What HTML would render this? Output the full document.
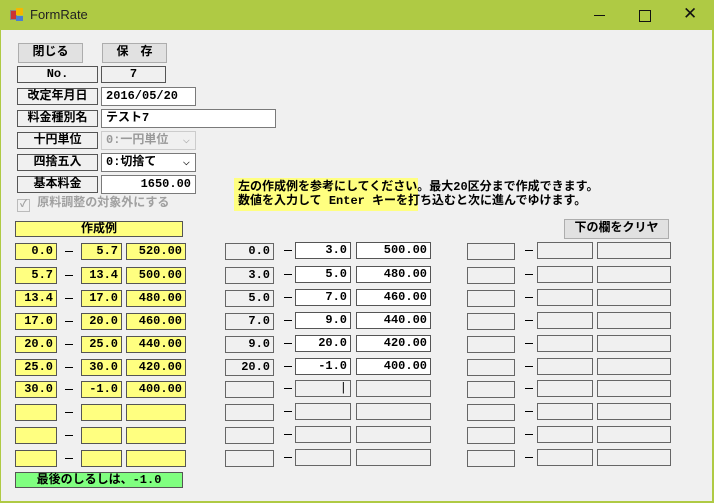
<!DOCTYPE html>
<html><head><meta charset="utf-8"><style>
body{margin:0;width:714px;height:503px;overflow:hidden;background:#afca44;font-family:"Liberation Mono","Noto Sans CJK JP",monospace;}
#win{position:absolute;left:1px;top:30px;width:711px;height:471px;background:#f0f0f0;}
.a{position:absolute;box-sizing:border-box;font-size:12px;font-weight:bold;line-height:14px;white-space:nowrap;color:#000;}
.lb{border:1px solid #555;background:#f0f0f0;text-align:center;}
.in{border:1px solid #7a7a7a;background:#fff;padding:0 4px;}
.r{text-align:right;padding-right:4px;}
.y{border:1px solid #555;background:#ffff80;text-align:right;padding-right:3px;}
.g{border:1px solid #666;background:#f0f0f0;text-align:right;padding-right:3px;}
.w{border:1px solid #555;background:#fff;text-align:right;padding-right:3px;}
.btn{border:1px solid #adadad;background:#e1e1e1;text-align:center;line-height:17px;}
.d{position:absolute;height:1px;width:8px;background:#000;}
</style></head><body>
<div style="position:absolute;left:10px;top:8px;width:14px;height:14px;">
<div style="position:absolute;left:0;top:2px;width:5px;height:8px;background:#c33;border:1px solid #888"></div>
<div style="position:absolute;left:6px;top:0;width:7px;height:7px;background:#f5b800"></div>
<div style="position:absolute;left:6px;top:8px;width:7px;height:5px;background:#4a7fd0"></div></div>
<div style="position:absolute;left:30px;top:7px;font-family:'Liberation Sans',sans-serif;font-size:13px;color:#222">FormRate</div>
<div style="position:absolute;left:594px;top:15px;width:11px;height:1px;background:#111"></div>
<div style="position:absolute;left:639px;top:10px;width:10px;height:10px;border:1px solid #111"></div>
<div style="position:absolute;left:683px;top:4px;font-family:'DejaVu Sans';font-size:17px;color:#111">✕</div>
<div id="win"></div>
<div class="a btn" style="left:18px;top:43px;width:65px;height:20px">閉じる</div>
<div class="a btn" style="left:102px;top:43px;width:65px;height:20px">保　存</div>
<div class="a lb" style="left:17px;top:66px;width:81px;height:17px">No.</div>
<div class="a lb" style="left:101px;top:66px;width:65px;height:17px">7</div>
<div class="a lb" style="left:17px;top:88px;width:81px;height:17px">改定年月日</div>
<div class="a in" style="left:101px;top:87px;width:95px;height:19px;line-height:17px">2016/05/20</div>
<div class="a lb" style="left:17px;top:110px;width:81px;height:17px">料金種別名</div>
<div class="a in" style="left:101px;top:109px;width:175px;height:19px;line-height:17px">テスト7</div>
<div class="a lb" style="left:17px;top:132px;width:81px;height:17px">十円単位</div>
<div class="a in" style="left:101px;top:131px;width:95px;height:19px;line-height:17px;color:#999;border-color:#ccc;background:#f0f0f0">0:一円単位<span style="position:absolute;right:5px;font-weight:normal;color:#aaa">⌵</span></div>
<div class="a lb" style="left:17px;top:154px;width:81px;height:17px">四捨五入</div>
<div class="a in" style="left:101px;top:153px;width:95px;height:19px;line-height:17px">0:切捨て<span style="position:absolute;right:5px;font-weight:normal">⌵</span></div>
<div class="a lb" style="left:17px;top:176px;width:81px;height:17px">基本料金</div>
<div class="a in r" style="left:101px;top:175px;width:95px;height:19px;line-height:17px">1650.00</div>
<div class="a" style="left:17px;top:196px;color:#a0a0a0"><span style="display:inline-block;width:11px;height:11px;border:1px solid #bbb;font-size:10px;line-height:11px;text-align:center;vertical-align:-1px">✓</span> 原料調整の対象外にする</div>
<div class="a" style="left:234px;top:178px;width:184px;height:33px;background:#ffff80;padding:2px 4px;line-height:14px">左の作成例を参考にしてください。最大20区分まで作成できます。<br>数値を入力して Enter キーを打ち込むと次に進んでゆけます。</div>
<div class="a y" style="left:15px;top:221px;width:168px;height:16px;text-align:center;padding:0">作成例</div>
<div class="a btn" style="left:564px;top:219px;width:105px;height:20px">下の欄をクリヤ</div>
<div class="a" style="left:15px;top:472px;width:168px;height:16px;background:#80ff80;border:1px solid #555;text-align:center">最後のしるしは、-1.0</div>
<div id="rows"></div>
<script>
var L=[["0.0","5.7","520.00"],["5.7","13.4","500.00"],["13.4","17.0","480.00"],["17.0","20.0","460.00"],["20.0","25.0","440.00"],["25.0","30.0","420.00"],["30.0","-1.0","400.00"],["","",""],["","",""],["","",""]];
var M=[["0.0","3.0","500.00"],["3.0","5.0","480.00"],["5.0","7.0","460.00"],["7.0","9.0","440.00"],["9.0","20.0","420.00"],["20.0","-1.0","400.00"]];
var tops=[243,267,290,313,336,359,381,404,427,450],h="";
function b(c,x,y,w,t){return '<div class="a '+c+'" style="left:'+x+'px;top:'+y+'px;width:'+w+'px;height:17px">'+t+'</div>';}
for(var i=0;i<10;i++){var y=tops[i];
h+=b("y",15,y,42,L[i][0])+'<div class="d" style="left:65px;top:'+(y+8)+'px"></div>'+b("y",81,y,41,L[i][1])+b("y",126,y,60,L[i][2]);
var m=M[i];
h+=b("g",225,y,49,m?m[0]:"")+'<div class="d" style="left:284px;top:'+(y+7)+'px"></div>';
h+=b(m?"w":"g",295,y-1,56,m?m[1]:(i==6?'<span style="font-weight:normal">|</span>':""))+b(m?"w":"g",356,y-1,75,m?m[2]:"");
h+=b("g",467,y,48,"")+'<div class="d" style="left:525px;top:'+(y+7)+'px"></div>'+b("g",537,y-1,56,"")+b("g",597,y-1,74,"");}
document.getElementById("rows").innerHTML=h;
</script>
</body></html>
